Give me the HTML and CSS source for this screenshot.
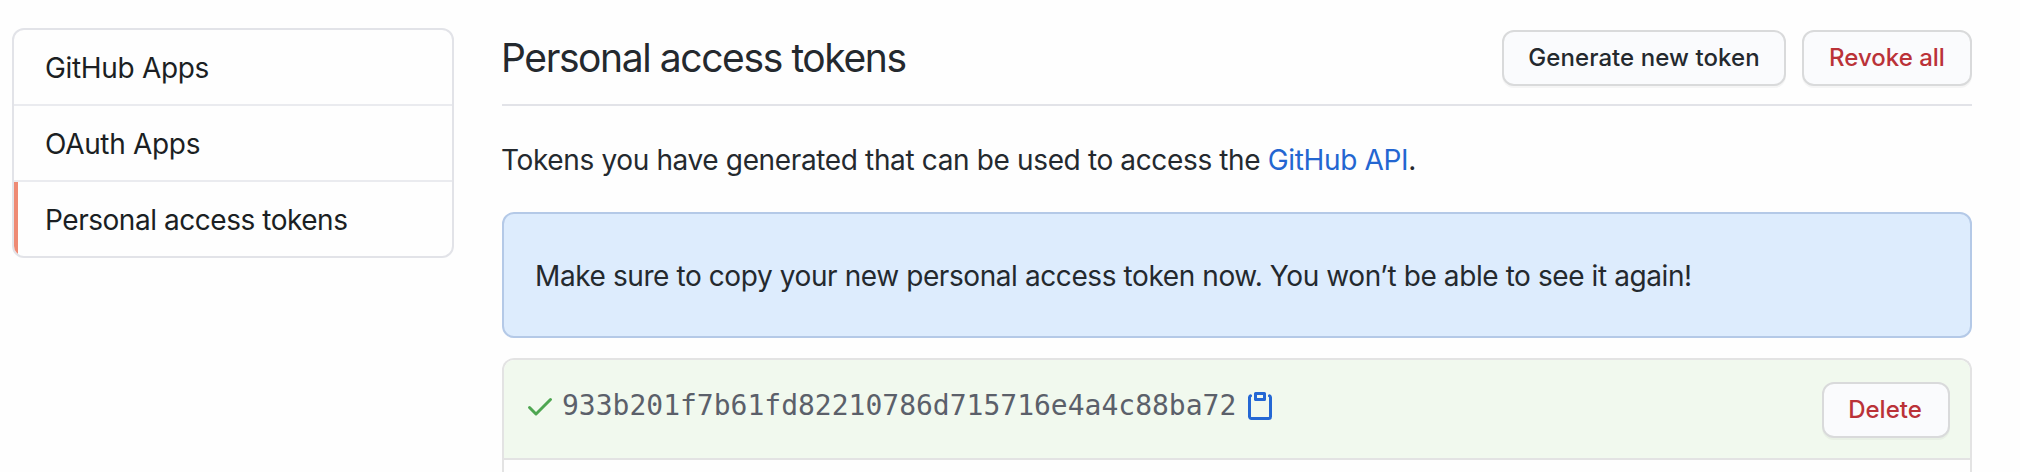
FILE: index.html
```html
<!DOCTYPE html>
<html lang="en">
<head>
<meta charset="utf-8">
<title>Personal access tokens</title>
<link rel="stylesheet" href="styles.css">
</head>
<body>
<div class="layout">
  <nav class="menu">
    <a class="menu-item">GitHub Apps</a>
    <a class="menu-item">OAuth Apps</a>
    <a class="menu-item selected">Personal access tokens</a>
  </nav>
  <main class="content">
    <header class="subhead">
      <h2 class="title">Personal access tokens</h2>
      <div class="actions">
        <button class="btn btn-generate">Generate new token</button>
        <button class="btn btn-danger btn-revoke">Revoke all</button>
      </div>
    </header>
    <p class="intro">Tokens you have generated that can be used to access the <a class="link">GitHub API</a>.</p>
    <div class="flash">Make sure to copy your new personal access token now. You won’t be able to see it again!</div>
    <section class="token-list">
      <div class="token-row">
        <svg class="icon check" viewBox="0 0 16 16"><path d="M13.78 4.22a.75.75 0 010 1.06l-7.25 7.25a.75.75 0 01-1.06 0L2.22 9.28a.75.75 0 011.06-1.06L6 10.94l6.72-6.72a.75.75 0 011.06 0z"/></svg>
        <code class="token">933b201f7b61fd82210786d715716e4a4c88ba72</code>
        <svg class="icon clipboard" viewBox="0 0 16 16"><path fill-rule="evenodd" d="M5.75 1a.75.75 0 00-.75.75v3c0 .414.336.75.75.75h4.5a.75.75 0 00.75-.75v-3a.75.75 0 00-.75-.75h-4.5zm.75 3V2.5h3V4h-3zm-2.874-.467a.75.75 0 00-.752-1.298A1.75 1.75 0 002 3.75v9.5c0 .966.784 1.75 1.75 1.75h8.5A1.75 1.75 0 0014 13.25v-9.5a1.75 1.75 0 00-.874-1.515.75.75 0 10-.752 1.298.25.25 0 01.126.217v9.5a.25.25 0 01-.25.25h-8.5a.25.25 0 01-.25-.25v-9.5a.25.25 0 01.126-.217z"/></svg>
        <button class="btn btn-danger btn-delete">Delete</button>
      </div>
    </section>
  </main>
</div>
</body>
</html>
```

FILE: styles.css
```css
* { box-sizing: border-box; }

body {
  margin: 0;
  height: 472px;
  overflow: hidden;
  background: #fefefe;
  color: #24292e;
  font-family: Inter, "Liberation Sans", sans-serif;
  font-size: 28px;
  line-height: 42px;
}

.layout {
  display: flex;
  align-items: flex-start;
  gap: 48px;
  padding: 28px 48px 0 12px;
}

.menu {
  width: 442px;
  flex: none;
  border: 2px solid #e2e3e8;
  border-radius: 12px;
  overflow: hidden;
  color: #1b1f23;
}

.menu-item {
  display: block;
  height: 76px;
  padding: 17px 31px 0;
  border-bottom: 2px solid #eaebef;
  white-space: nowrap;
  letter-spacing: -0.32px;
}

.menu-item.selected {
  height: 74px;
  padding-left: 27px;
  border-bottom: 0;
  border-left: 4px solid #ee8a74;
  letter-spacing: -0.46px;
}

.content { width: 1470px; flex: none; }

.subhead {
  display: flex;
  justify-content: space-between;
  align-items: flex-start;
  height: 78px;
  padding-top: 2px;
  border-bottom: 2px solid #e2e3e8;
}

.title {
  margin: 0 0 0 -1px;
  font-size: 39px;
  font-weight: 400;
  line-height: 56px;
  letter-spacing: -1.4px;
  white-space: nowrap;
}

.actions { display: flex; gap: 16px; }

.btn {
  height: 56px;
  padding: 0;
  border: 2px solid #d9dadb;
  border-radius: 12px;
  background: #fafbfd;
  box-shadow: 0 2px 0 rgba(27, 31, 35, 0.04);
  color: #24292e;
  font-family: inherit;
  font-size: 24px;
  font-weight: 500;
  line-height: 40px;
  white-space: nowrap;
}

.btn-danger { color: #ba3238; }
.btn-generate { width: 284px; letter-spacing: 0.08px; }
.btn-revoke { width: 170px; }
.btn-delete { width: 128px; margin-left: auto; padding-right: 2px; }

.intro {
  margin: 0 0 0 -1px;
  padding-top: 33px;
  height: 106px;
  white-space: nowrap;
  letter-spacing: -0.36px;
}

.link { color: #2366d1; }

.flash {
  height: 126px;
  padding: 41px 31px 0;
  border: 2px solid #b4c9e7;
  border-radius: 12px;
  background: #ddecfd;
  white-space: nowrap;
  letter-spacing: -0.41px;
}

.token-list {
  height: 114px;
  margin-top: 20px;
  border: 2px solid #e3e3e3;
  border-bottom: 0;
  border-radius: 12px 12px 0 0;
  overflow: hidden;
}

.token-row {
  display: flex;
  align-items: flex-start;
  height: 100px;
  padding: 22px 20px 0;
  border-bottom: 2px solid #e3e3e3;
  background: #f1f9ee;
}

.icon { width: 32px; height: 32px; flex: none; margin-top: 8px; }
.check { fill: #4ea651; }
.clipboard { fill: #2568d4; margin-left: 8px; }

.token {
  margin: 3px 0 0 6px;
  color: #5b606a;
  font-family: "DejaVu Sans Mono", monospace;
  font-size: 28px;
  line-height: 42px;
}
```
